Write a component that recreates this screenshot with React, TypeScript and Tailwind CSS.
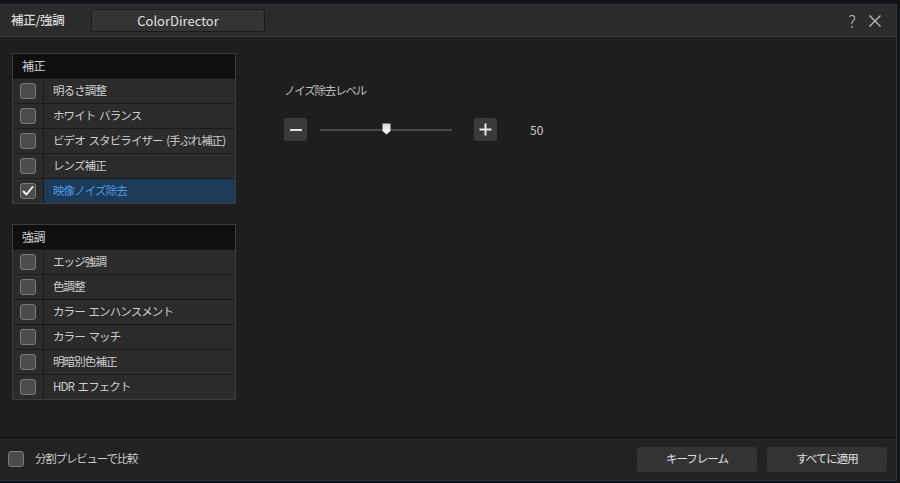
import React from "react";

const font = { fontFamily: '"Noto Sans CJK JP", "Noto Sans", sans-serif' };

function Box({ checked = false }: { checked?: boolean }) {
  return (
    <div className="w-[16px] h-[16px] rounded-[3px] border border-[#7a7a7a] bg-[#4c4c4c] flex items-center justify-center">
      {checked && (
        <svg width="14" height="14" viewBox="0 0 14 14">
          <path d="M2.5 7.5 L5.5 10.5 L11.5 3" stroke="#f2f2f2" strokeWidth="2" fill="none" strokeLinecap="round" strokeLinejoin="round" />
        </svg>
      )}
    </div>
  );
}

function Row({ label, checked = false, selected = false }: { label: string; checked?: boolean; selected?: boolean }) {
  return (
    <div className="flex h-[25px] border-t border-[#1a1a1a] bg-[#2b2b2b]">
      <div className="w-[31px] flex items-center justify-center border-r border-[#1a1a1a] shrink-0">
        <Box checked={checked} />
      </div>
      <div
        className={`flex-1 flex items-center pl-[9px] text-[11.5px] tracking-[-0.9px] [word-spacing:2px] whitespace-pre ${selected ? "bg-[#1d3a58] text-[#4b9be3]" : "text-[#cfcfcf]"}`}
      >
        {label}
      </div>
    </div>
  );
}

function Group({ title, items, selectedIdx = -1 }: { title: string; items: string[]; selectedIdx?: number }) {
  return (
    <div className="w-[224px] border border-[#3c3c3c] bg-[#111]">
      <div className="h-[24px] flex items-center pl-[9px] text-[12px] text-[#d0d0d0] bg-[#0f0f0f] tracking-[-0.5px]">{title}</div>
      {items.map((it, i) => (
        <Row key={it} label={it} checked={i === selectedIdx} selected={i === selectedIdx} />
      ))}
    </div>
  );
}

export default function App() {
  return (
    <div className="w-[900px] h-[483px] bg-[#131313] overflow-hidden" style={font}>
      <div className="mt-[4px] w-[897px] h-[477px] border-t border-r border-b border-[#23344c] flex flex-col bg-[#1e1e1e]">
        {/* title bar */}
        <div className="h-[32px] shrink-0 bg-[#2b2b2b] border-b border-[#3b3b3b] flex items-center">
          <div className="pl-[11px] w-[91px] text-[12.5px] text-[#d8d8d8] font-medium tracking-[-0.3px]">補正/強調</div>
          <div className="w-[174px] h-[23px] rounded-[3px] bg-[#343434] border border-[#1a1a1a] flex items-center justify-center text-[13px] text-[#e0e0e0]">
            ColorDirector
          </div>
          <div className="flex-1" />
          <div className="text-[17px] text-[#b8b8b8] font-light leading-none mr-[12px]">?</div>
          <svg width="14" height="14" viewBox="0 0 14 14" className="mr-[14px]">
            <path d="M1.5 1.5 L12.5 12.5 M12.5 1.5 L1.5 12.5" stroke="#bdbdbd" strokeWidth="1.3" />
          </svg>
        </div>
        {/* main */}
        <div className="h-[400px] shrink-0 flex bg-[#1e1e1e]">
          <div className="pl-[12px] pt-[16px] flex flex-col gap-[20px]">
            <Group
              title="補正"
              items={["明るさ調整", "ホワイト バランス", "ビデオ スタビライザー (手ぶれ補正)", "レンズ補正", "映像ノイズ除去"]}
              selectedIdx={4}
            />
            <Group title="強調" items={["エッジ強調", "色調整", "カラー エンハンスメント", "カラー マッチ", "明暗別色補正", "HDR エフェクト"]} />
          </div>
          <div className="pl-[48px] pt-[45px]">
            <div className="text-[11.5px] text-[#bdbdbd] tracking-[-1.2px]">ノイズ除去レベル</div>
            <div className="mt-[19px] flex items-center">
              <div className="w-[23px] h-[23px] rounded-[3px] bg-[#3a3a3a] flex items-center justify-center">
                <div className="w-[12px] h-[2px] bg-[#e0e0e0]" />
              </div>
              <div className="relative ml-[13px] w-[132px] h-[2px] bg-[#4a4a4a]">
                <svg width="9" height="12" viewBox="0 0 9 12" className="absolute left-[62px] top-[-6px]">
                  <defs>
                    <linearGradient id="g" x1="0" y1="0" x2="0" y2="1">
                      <stop offset="0" stopColor="#d8d8d8" />
                      <stop offset="1" stopColor="#ffffff" />
                    </linearGradient>
                  </defs>
                  <path d="M0.5 0.5 H8.5 V8 L4.5 11.5 L0.5 8 Z" fill="url(#g)" />
                </svg>
              </div>
              <div className="ml-[22px] w-[23px] h-[23px] rounded-[3px] bg-[#3a3a3a] flex items-center justify-center">
                <svg width="13" height="13" viewBox="0 0 13 13">
                  <path d="M6.5 0.5 V12.5 M0.5 6.5 H12.5" stroke="#e6e6e6" strokeWidth="2" />
                </svg>
              </div>
              <div className="ml-[33px] text-[12px] text-[#cfcfcf]">50</div>
            </div>
          </div>
        </div>
        {/* footer */}
        <div className="flex-1 border-t border-[#0e0e0e] bg-[#222222] flex items-center">
          <div className="pl-[8px]">
            <Box />
          </div>
          <div className="ml-[11px] text-[11.5px] text-[#c8c8c8] tracking-[-1.2px]">分割プレビューで比較</div>
          <div className="flex-1" />
          <div className="w-[120px] h-[25px] rounded-[3px] bg-[#333333] flex items-center justify-center text-[11.5px] text-[#e0e0e0] tracking-[-1px]">
            キーフレーム
          </div>
          <div className="ml-[10px] mr-[9px] w-[120px] h-[25px] rounded-[3px] bg-[#333333] flex items-center justify-center text-[11.5px] text-[#e0e0e0] tracking-[-1px]">
            すべてに適用
          </div>
        </div>
      </div>
    </div>
  );
}
